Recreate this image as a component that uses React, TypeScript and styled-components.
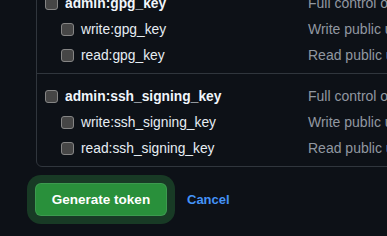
import React from 'react'
import styled, { createGlobalStyle } from 'styled-components'

interface Scope {
  name: string
  description: string
  sub?: boolean
}

const groups: Scope[][] = [
  [
    { name: 'admin:gpg_key', description: 'Full control of public user GPG keys' },
    { name: 'write:gpg_key', description: 'Write public user GPG keys', sub: true },
    { name: 'read:gpg_key', description: 'Read public user GPG keys', sub: true },
  ],
  [
    { name: 'admin:ssh_signing_key', description: 'Full control of public user SSH signing keys' },
    { name: 'write:ssh_signing_key', description: 'Write public user SSH signing keys', sub: true },
    { name: 'read:ssh_signing_key', description: 'Read public user SSH signing keys', sub: true },
  ],
]

const GlobalStyle = createGlobalStyle`
  html, body {
    margin: 0;
    padding: 0;
    background: #0d1117;
    overflow: hidden;
  }
  body {
    font-family: "Liberation Sans", Arial, sans-serif;
    font-size: 14px;
    color: #e6edf3;
  }
`

const Page = styled.div`
  width: 387px;
  height: 236px;
  padding-left: 36px;
  box-sizing: border-box;
  overflow: hidden;
`

const ScopeBox = styled.div`
  width: 640px;
  margin-top: -20px;
  border: 1px solid #30363d;
  border-radius: 6px;
`

const Group = styled.div`
  padding: 9px 0 5px;
  & + & {
    border-top: 1px solid #30363d;
  }
`

const Row = styled.label<{ $sub?: boolean }>`
  display: grid;
  grid-template-columns: ${({ $sub }) => ($sub ? '247px' : '263px')} 1fr;
  align-items: center;
  height: 26px;
  padding-left: ${({ $sub }) => ($sub ? '24px' : '8px')};
`

const Name = styled.span<{ $sub?: boolean }>`
  display: flex;
  align-items: center;
  gap: 7px;
  font-size: 13.8px;
  font-weight: ${({ $sub }) => ($sub ? 400 : 700)};
  color: ${({ $sub }) => ($sub ? '#e6edf3' : '#f0f6fc')};
  white-space: nowrap;
`

const Check = styled.input`
  appearance: none;
  margin: 0;
  width: 13px;
  height: 13px;
  border: 1px solid #858585;
  border-radius: 3px;
  background: #464646;
  box-sizing: border-box;
`

const Description = styled.span`
  color: #9198a1;
  white-space: nowrap;
`

const Actions = styled.div`
  display: flex;
  align-items: center;
  gap: 20px;
  margin-top: 16px;
`

const GenerateButton = styled.button`
  height: 33px;
  width: 132px;
  margin-left: -1px;
  border: 1px solid rgba(240, 246, 252, 0.1);
  border-radius: 6px;
  background: #29903b;
  color: #ffffff;
  font-family: "Liberation Sans", Arial, sans-serif;
  font-size: 13.5px;
  font-weight: 700;
  box-shadow: 0 0 0 8px #183a25;
`

const CancelLink = styled.a`
  color: #4493f8;
  font-weight: 700;
  font-size: 13px;
  text-decoration: none;
`

export default function App() {
  return (
    <Page>
      <GlobalStyle />
      <ScopeBox>
        {groups.map((group, i) => (
          <Group key={i}>
            {group.map((scope) => (
              <Row key={scope.name} $sub={scope.sub}>
                <Name $sub={scope.sub}>
                  <Check type="checkbox" />
                  {scope.name}
                </Name>
                <Description>{scope.description}</Description>
              </Row>
            ))}
          </Group>
        ))}
      </ScopeBox>
      <Actions>
        <GenerateButton>Generate token</GenerateButton>
        <CancelLink href="#">Cancel</CancelLink>
      </Actions>
    </Page>
  )
}
